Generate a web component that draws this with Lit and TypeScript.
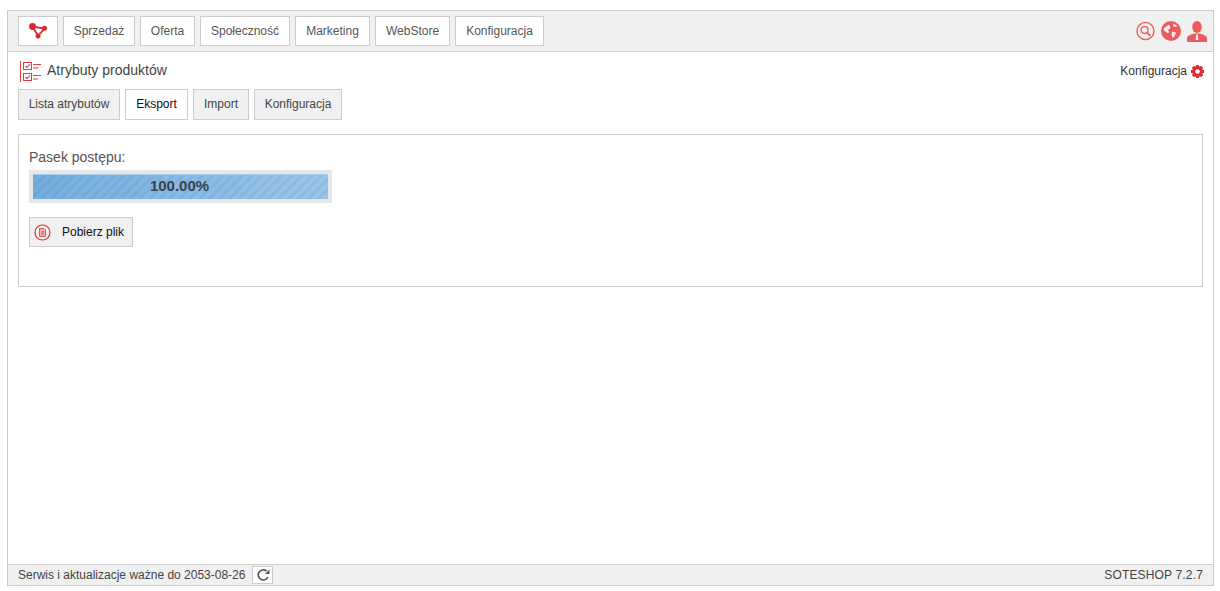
import { LitElement, html, css } from "lit";
import { customElement } from "lit/decorators.js";

@customElement("app-root")
export class AppRoot extends LitElement {
  static styles = css`
    :host { display: block; height: 591px; padding: 10px 6px 5px 7px; box-sizing: border-box; font-family: "Liberation Sans", Arial, sans-serif; font-size: 12px; color: #444; background: #fff; }
    * { box-sizing: border-box; }
    .frame { height: 576px; border: 1px solid #ccc; display: flex; flex-direction: column; }
    .top { height: 41px; flex: none; background: #f0f0f0; border-bottom: 1px solid #ccc; display: flex; align-items: flex-start; padding: 5px 10px; gap: 5px; }
    .btn { height: 30px; display: flex; align-items: center; justify-content: center; background: #fff; border: 1px solid #ccc; color: #555; }
    .logo { width: 40px; }
    .spacer { flex: 1; }
    .icons { display: flex; align-items: center; gap: 6px; height: 30px; margin-right: -4px; }
    .main { flex: 1; padding: 7px 10px 0; display: flex; flex-direction: column; min-height: 0; }
    .head { height: 24px; display: flex; align-items: center; padding-left: 2px; }
    .title { font-size: 14px; color: #444; margin-left: 5px; padding-bottom: 2px; }
    .cfg { display: flex; align-items: center; gap: 4px; color: #333; font-size: 12px; margin-right: -1px; }
    .tabs { display: flex; gap: 5px; margin-top: 6px; }
    .tab { height: 31px; display: flex; align-items: center; justify-content: center; background: #f0f0f0; border: 1px solid #ccc; color: #444; padding-bottom: 2px; }
    .tab.on { background: #fff; color: #111; }
    .card { margin-top: 14px; height: 153px; border: 1px solid #ccc; padding: 14px 10px; }
    .label { font-size: 14px; color: #555; line-height: 16px; }
    .bar { margin-top: 5px; width: 303px; height: 33px; background: #e6e6e6; padding: 4px; }
    .fill { height: 25px; display: flex; align-items: center; justify-content: center; padding: 0 2px 3px 0; font-size: 15px; font-weight: bold; color: #37424d;
      border-top: 1px solid #a9cdea;
      background-color: #74a9d8;
      background-image: repeating-linear-gradient(135deg, rgba(60,110,160,.11) 0 3px, rgba(255,255,255,0) 3px 7px), linear-gradient(to right, #74aedd, #9cc6e8); }
    .dl { margin-top: 14px; width: 104px; height: 30px; display: flex; align-items: center; background: #f0f0f0; border: 1px solid #ccc; color: #111; padding-left: 5px; }
    .dl svg { margin-left: -1px; }
    .dl span { margin-left: 11px; }
    .foot { height: 21px; flex: none; background: #f0f0f0; border-top: 1px solid #ccc; display: flex; align-items: center; padding: 0 10px; color: #444; }
    .refresh { width: 21px; height: 18px; margin-left: 7px; background: #fff; border: 1px solid #ccc; display: flex; align-items: center; justify-content: center; }
    .ver { letter-spacing: .16px; }
    svg { display: block; flex: none; }
  `;

  render() {
    const nav: [string, number][] = [["Sprzedaż", 72], ["Oferta", 55], ["Społeczność", 90], ["Marketing", 75], ["WebStore", 75], ["Konfiguracja", 89]];
    const tabs: [string, number, boolean][] = [["Lista atrybutów", 102, false], ["Eksport", 63, true], ["Import", 56, false], ["Konfiguracja", 88, false]];
    return html`<div class="frame">
      <div class="top">
        <div class="btn logo">
          <svg width="18" height="16" viewBox="0 0 18 16"><path d="M3.500 3.500L9 13L15.500 5.500Z" fill="none" stroke="#e0272d" stroke-width="1.800"/><circle cx="3.500" cy="3.500" r="3.400" fill="#e0272d"/><circle cx="15.500" cy="5.300" r="2.500" fill="#e0272d"/><circle cx="9" cy="13" r="2.500" fill="#e0272d"/></svg>
        </div>
        ${nav.map(([t, w]) => html`<div class="btn" style="width:${w}px">${t}</div>`)}
        <div class="spacer"></div>
        <div class="icons">
          <svg width="19" height="20" viewBox="0 0 20 20" fill="none" stroke="#ec5a5f"><circle cx="10" cy="10" r="9" stroke-width="1.400"/><circle cx="9" cy="9" r="3.600" stroke-width="1.400"/><path d="M11.700 11.700L15 15" stroke-width="2"/></svg>
          <svg width="20" height="20" viewBox="0 0 20 20"><circle cx="10" cy="10" r="10" fill="#ec5a5f"/><path d="M3 7L8 3.500L9.500 7L7 9L8.500 11.500L6 12L2.500 9ZM11 10.500L15 11.500L13.500 15.500L11.500 17L10.500 13.500ZM12.500 2.500L16.500 5L14 6L12 5Z" fill="#fdeaea"/></svg>
          <svg width="20" height="21" viewBox="0 0 20 21"><ellipse cx="10" cy="6" rx="4.800" ry="6" fill="#ec5a5f"/><path d="M0 21V17.500C0 14.500 4 13.500 7 12.500H13C16 13.500 20 14.500 20 17.500V21Z" fill="#ec5a5f"/><path d="M9.200 13.500H10.800L11.300 19H8.700Z" fill="#fff"/></svg>
        </div>
      </div>
      <div class="main">
        <div class="head">
          <svg width="22" height="21" viewBox="0 0 22 21" fill="none" stroke="#dd3c42"><path d="M.5 0V21" stroke-width="1"/><rect x="3.500" y="1.500" width="8" height="7"/><rect x="3.500" y="12.500" width="8" height="7"/><path d="M5.500 5L7 6.500L10 3M5.500 16L7 17.500L10 14M13 3.500H21M13 7H18M13 14.500H21M13 18H18" stroke-width="1.100"/></svg>
          <div class="title">Atrybuty produktów</div>
          <div class="spacer"></div>
          <div class="cfg">Konfiguracja
            <svg width="13" height="13" viewBox="0 0 14 14"><path d="M5.500 0H8.500L9 2L11 1L13 3L12 5L14 5.500V8.500L12 9L13 11L11 13L9 12L8.500 14H5.500L5 12L3 13L1 11L2 9L0 8.500V5.500L2 5L1 3L3 1L5 2Z" fill="#dd2b30"/><circle cx="7" cy="7" r="2.500" fill="#fff"/></svg>
          </div>
        </div>
        <div class="tabs">
          ${tabs.map(([t, w, on]) => html`<div class="tab ${on ? "on" : ""}" style="width:${w}px">${t}</div>`)}
        </div>
        <div class="card">
          <div class="label">Pasek postępu:</div>
          <div class="bar"><div class="fill">100.00%</div></div>
          <div class="dl">
            <svg width="17" height="17" viewBox="0 0 17 17" fill="none" stroke="#d9363c"><circle cx="8.500" cy="8.500" r="7.500" stroke-width="1.200"/><path d="M5.500 4.500H10L11.500 6V12.500H5.500Z" fill="#f3b6b8" stroke-width=".8"/><path d="M7 8H10M7 10H10" stroke-width=".8"/></svg>
            <span>Pobierz plik</span>
          </div>
        </div>
      </div>
      <div class="foot">
        Serwis i aktualizacje ważne do 2053-08-26
        <div class="refresh"><svg width="14" height="14" viewBox="0 0 14 14" fill="none" stroke="#555" stroke-width="1.700"><path d="M11.800 9A5 5 0 1 1 10.500 3.200"/><path d="M9 6H13.500V1.500Z" fill="#555" stroke="none"/></svg></div>
        <div class="spacer"></div>
        <span class="ver">SOTESHOP 7.2.7</span>
      </div>
    </div>`;
  }
}
